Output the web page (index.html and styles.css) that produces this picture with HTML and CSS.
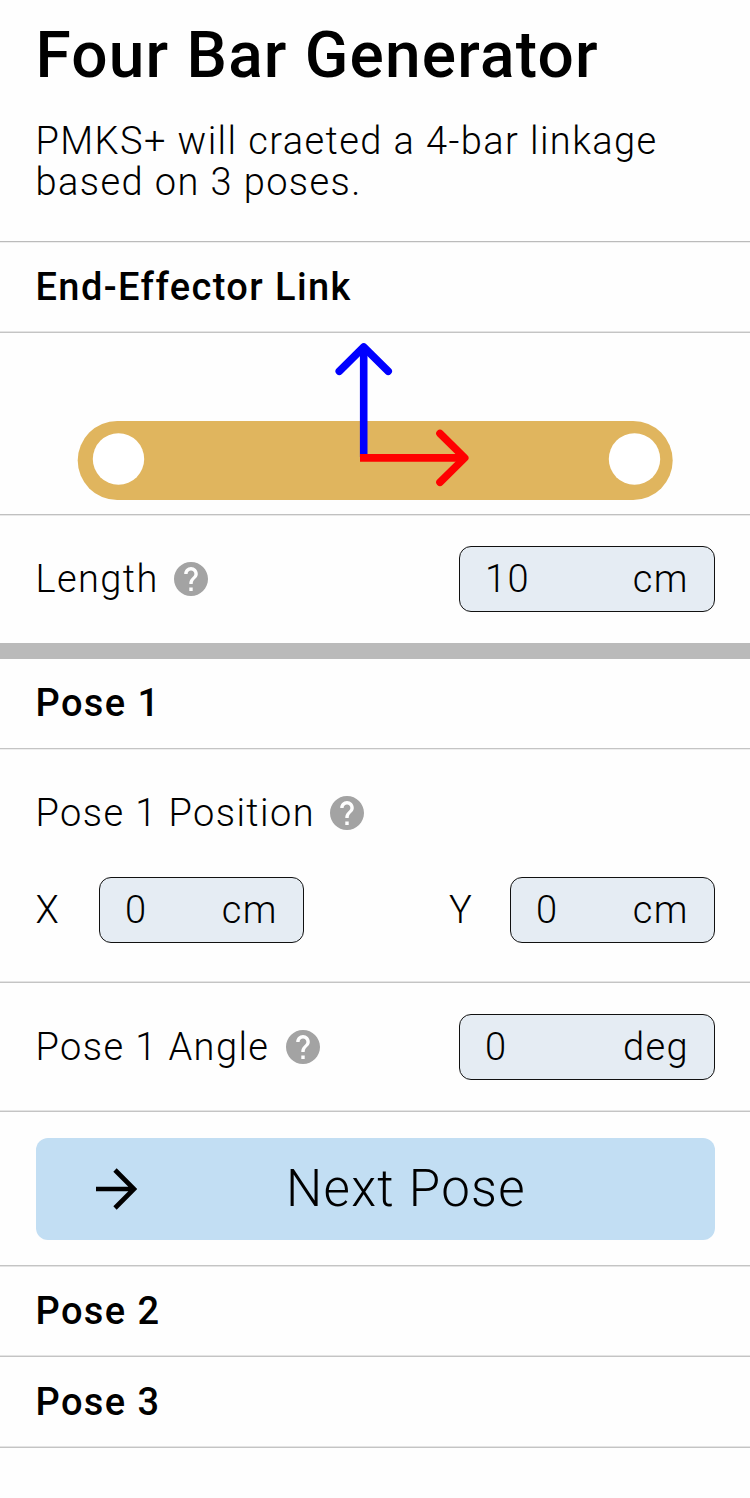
FILE: index.html
```html
<!DOCTYPE html>
<html lang="en">
<head>
<meta charset="utf-8">
<title>Four Bar Generator</title>
<link rel="stylesheet" href="styles.css">
</head>
<body>
<svg class="defs" width="0" height="0"><symbol id="help" viewBox="2 2 20 20"><path d="M12 2C6.480 2 2 6.480 2 12s4.480 10 10 10 10-4.480 10-10S17.520 2 12 2zm1 17h-2v-2h2v2zm2.070-7.750l-.9.920C13.450 12.900 13 13.500 13 15h-2v-.5c0-1.100.45-2.100 1.170-2.830l1.240-1.260c.37-.36.59-.86.59-1.410 0-1.100-.9-2-2-2s-2 .9-2 2H8c0-2.210 1.790-4 4-4s4 1.790 4 4c0 .88-.36 1.680-.93 2.250z"/></symbol></svg>
<main class="panel">
  <header class="intro">
    <h1>Four Bar Generator</h1>
    <p>PMKS+ will craeted a 4-bar linkage<br>based on 3 poses.</p>
  </header>
  <h2 class="heading">End-Effector Link</h2>
  <div class="diagram">
    <svg width="750" height="181" viewBox="0 333 750 181">
      <rect x="77.700" y="421" width="595" height="79" rx="39.500" fill="#e0b55e"/>
      <circle cx="118.500" cy="459" r="25.700" fill="#fff"/>
      <circle cx="634.500" cy="459" r="25.700" fill="#fff"/>
      <path class="axis blue" d="M363.700 457V348"/>
      <path class="axis blue" d="M339.300 371.300L363.700 347L388.200 371.300"/>
      <path class="axis red" d="M360 457.900H465"/>
      <path class="axis red tip" d="M440 433.500L464.700 457.900L440 482.300"/>
    </svg>
  </div>
  <div class="row length">
    <span class="label">Length</span><svg class="help"><use href="#help"/></svg>
    <div class="field wide"><span>10</span><span>cm</span></div>
  </div>
  <h2 class="heading first">Pose 1</h2>
  <section class="position">
    <div class="caption"><span class="label">Pose 1 Position</span><svg class="help"><use href="#help"/></svg></div>
    <div class="coords">
      <span class="label x">X</span><div class="field"><span>0</span><span>cm</span></div>
      <span class="label y">Y</span><div class="field"><span>0</span><span>cm</span></div>
    </div>
  </section>
  <div class="row angle">
    <span class="label">Pose 1 Angle</span><svg class="help"><use href="#help"/></svg>
    <div class="field wide"><span>0</span><span>deg</span></div>
  </div>
  <div class="action">
    <button class="next"><svg class="arrow" width="42" height="42" viewBox="0 0 42 42"><path d="M1 21H39M20 2L39 21L20 40"/></svg><span>Next Pose</span></button>
  </div>
  <h2 class="heading">Pose 2</h2>
  <h2 class="heading">Pose 3</h2>
</main>
</body>
</html>
```
FILE: styles.css
```css
* { box-sizing: border-box; }
body { margin: 0; background: #fefefe; color: #000; font-family: Roboto, sans-serif; }
.defs { display: none; }
.panel { width: 750px; height: 1498px; overflow: hidden; font-size: 38px; font-weight: 300; letter-spacing: 1.420px; }
.intro { height: 242px; padding: 18px 35.500px 0; border-bottom: 1px solid #bbb; box-shadow: 0 1px #eee; }
h1 { margin: 0; font-size: 64px; line-height: 76px; font-weight: 500; letter-spacing: 1.200px; white-space: nowrap; }
.intro p { margin: 27px 0 0; line-height: 41px; white-space: nowrap; }
.heading { margin: 0; height: 91px; padding: 0 35.500px; line-height: 90px; font-size: 38px; font-weight: 500; letter-spacing: 1.400px; border-bottom: 1px solid #c4c4c4; box-shadow: inset 0 -1px #e4e4e4; }
.first { height: 90px; line-height: 89px; box-shadow: 0 1px #eee; }
.diagram { height: 182px; border-bottom: 1px solid #c0c0c0; box-shadow: 0 1px #e8e8e8; }
.diagram svg { display: block; }
.axis { fill: none; stroke-width: 7.600; stroke-linejoin: round; }
.axis + .axis { stroke-linecap: round; }
.blue { stroke: #00f; }
.red { stroke: #f00; }
.blue + .red { stroke-linecap: butt; }
.row { display: flex; align-items: center; padding: 0 35px 0 35.500px; }
.length { height: 144px; border-bottom: 16px solid #bababa; }
.label { white-space: nowrap; }
.help { width: 34px; height: 34px; margin-left: 15.500px; fill: #a3a3a3; }
.angle .help { margin-left: 17px; }
.field { display: flex; align-items: center; justify-content: space-between; width: 205px; height: 66px; padding: 0 25px; border: 1px solid #111; border-radius: 12px; background: #e5ecf3; }
.wide { width: 256px; margin-left: auto; }
.position { height: 234px; padding: 41px 35px 0 35.500px; border-bottom: 1px solid #c4c4c4; box-shadow: inset 0 -1px #e4e4e4; }
.caption { display: flex; align-items: center; height: 45px; }
.coords { display: flex; align-items: center; margin-top: 42px; }
.x { width: 63.500px; }
.y { width: 61px; margin-left: auto; }
.angle { height: 129px; border-bottom: 1px solid #c4c4c4; box-shadow: inset 0 -1px #e4e4e4; }
.action { height: 154px; padding: 25.500px 35px 0 35.500px; border-bottom: 1px solid #c4c4c4; box-shadow: 0 1px #e4e4e4; }
.next { display: flex; align-items: center; width: 679.500px; height: 102px; padding: 0 0 0 59.500px; border: 0; border-radius: 12px; background: #c2def3; color: #000; font: 300 51px Roboto, sans-serif; letter-spacing: 1.300px; }
.next span { margin-left: 149px; white-space: nowrap; }
.arrow path { fill: none; stroke: #000; stroke-width: 4.700; }
```
